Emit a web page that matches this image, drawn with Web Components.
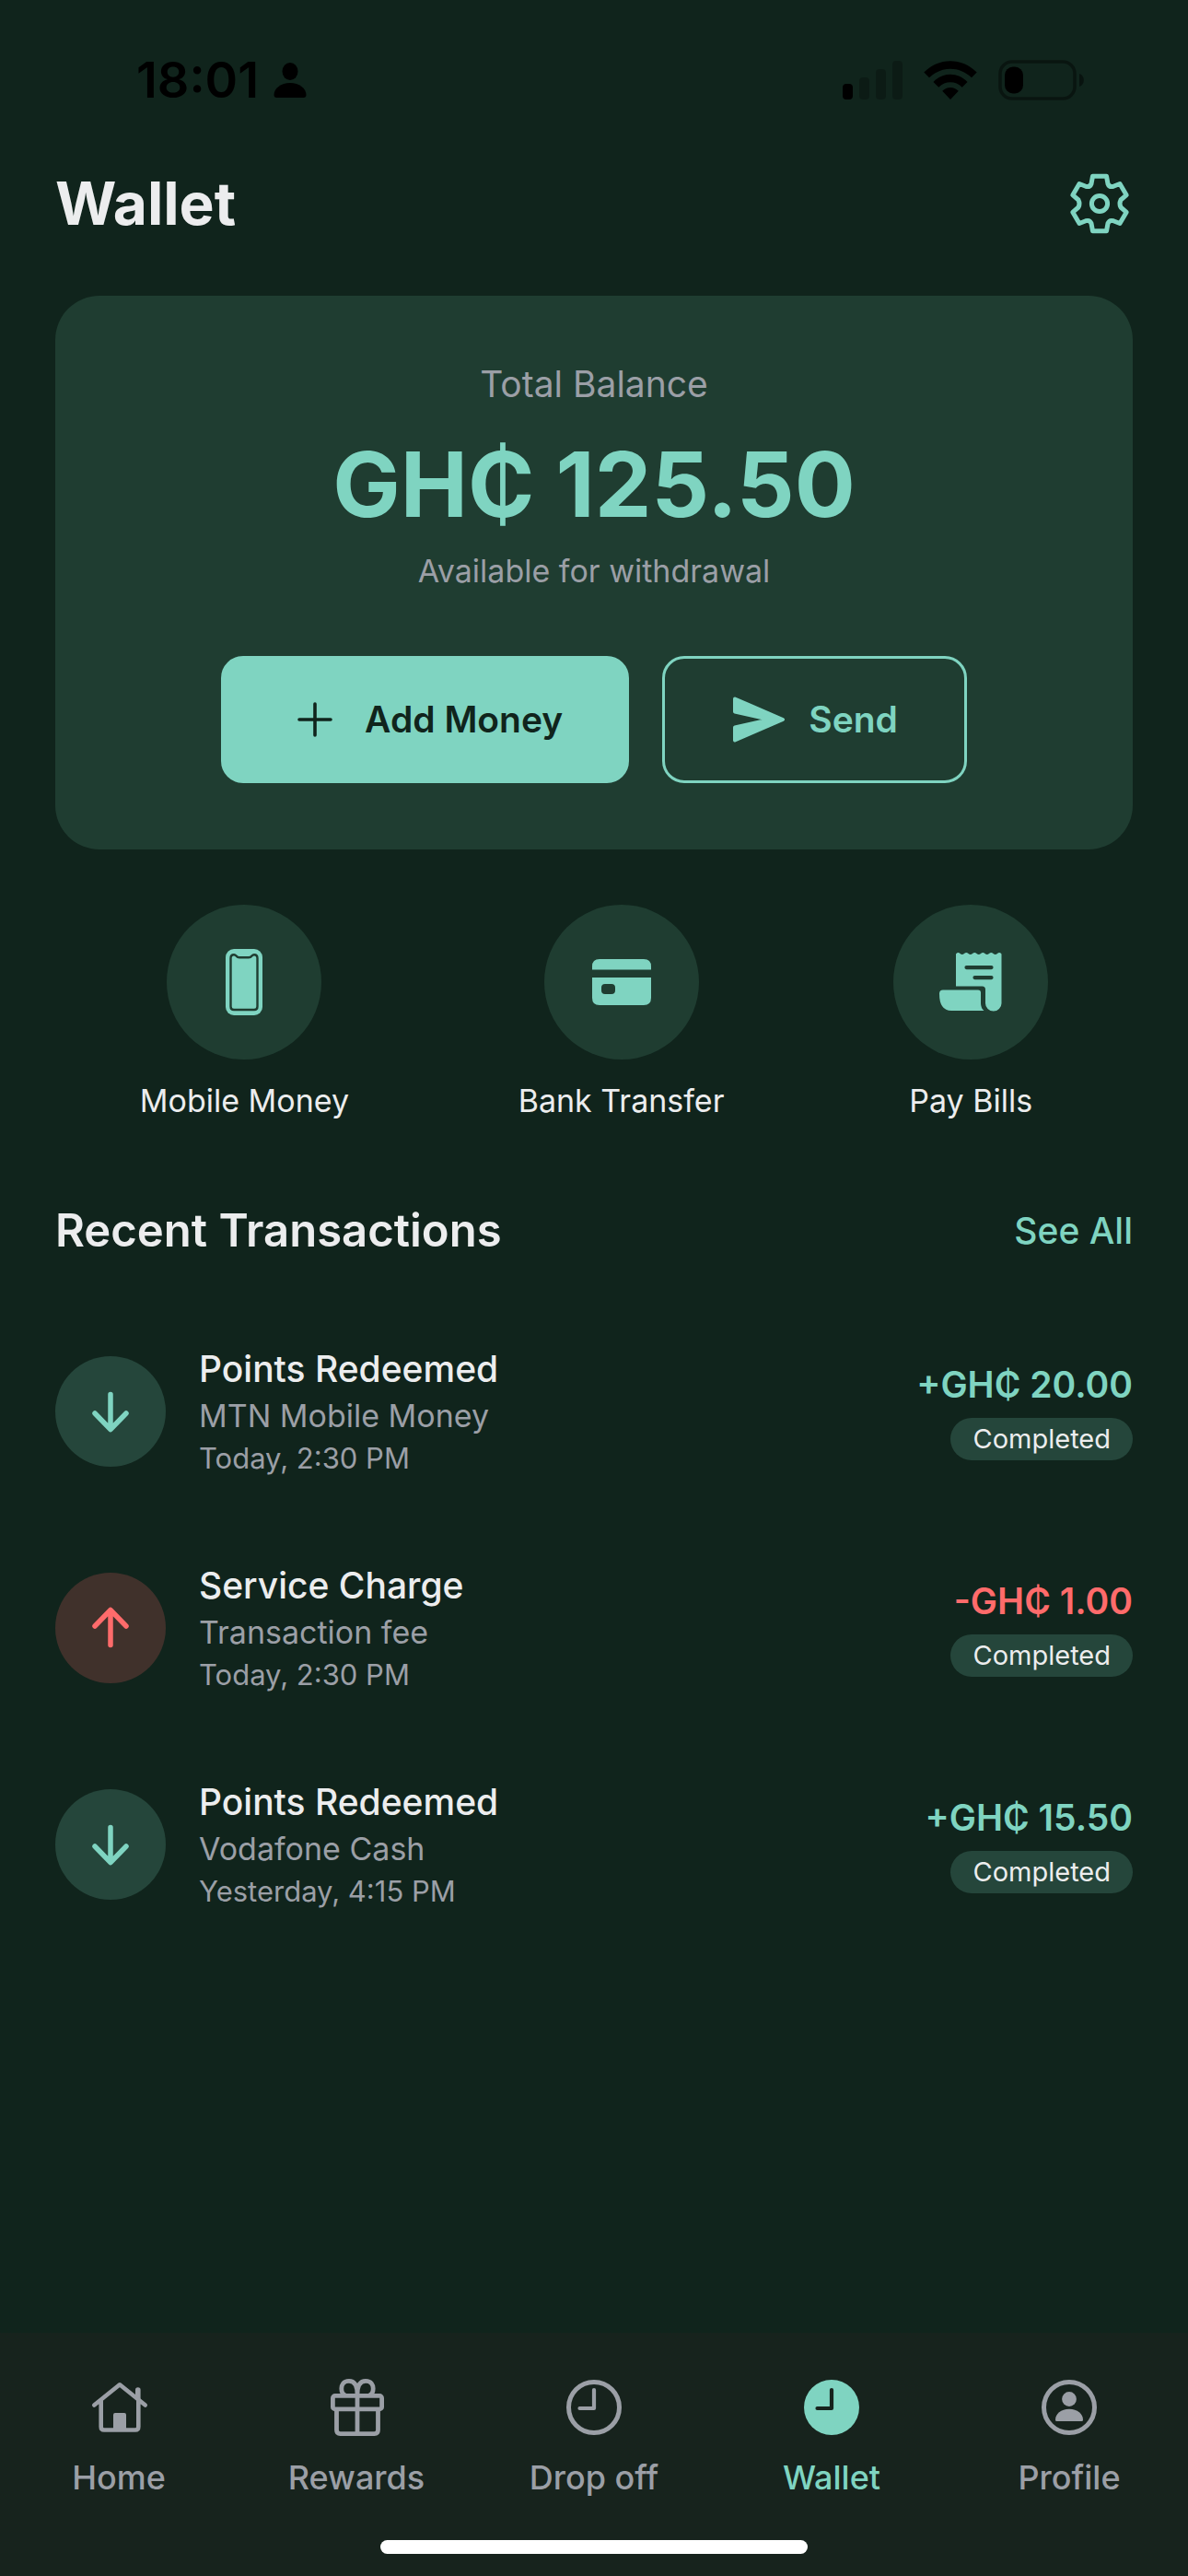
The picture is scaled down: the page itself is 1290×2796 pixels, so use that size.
<!DOCTYPE html>
<html lang="en">
<head>
<meta charset="utf-8">
<meta name="viewport" content="width=device-width, initial-scale=1">
<title>Wallet</title>
<style>
  :root {
    --bg: #10241c;
    --card: #1f3d31;
    --chip: #25463b;
    --bar: #17231d;
    --mint: #7fd4c1;
    --red: #ff6b6b;
    --red-soft: #40312b;
    --text: #ecedee;
    --muted: #9b9fa6;
  }
  body {
    margin: 0;
    background: var(--bg);
    color: var(--text);
    font-family: Inter, "Liberation Sans", sans-serif;
  }
</style>
</head>
<body>
<wallet-app>
  <status-bar slot="status" time="18:01"></status-bar>
  <page-header slot="header">Wallet</page-header>

  <balance-card label="Total Balance" note="Available for withdrawal">
    GH₵ 125.50
    <action-button slot="actions" icon="plus" variant="solid">Add Money</action-button>
    <action-button slot="actions" icon="send" variant="outline">Send</action-button>
  </balance-card>

  <quick-actions>
    <quick-action icon="phone">Mobile Money</quick-action>
    <quick-action icon="card">Bank Transfer</quick-action>
    <quick-action icon="receipt">Pay Bills</quick-action>
  </quick-actions>

  <transaction-list heading="Recent Transactions" link="See All">
    <transaction-item kind="in" amount="+GH₵ 20.00" source="MTN Mobile Money" date="Today, 2:30 PM" status="Completed">Points Redeemed</transaction-item>
    <transaction-item kind="out" amount="-GH₵ 1.00" source="Transaction fee" date="Today, 2:30 PM" status="Completed">Service Charge</transaction-item>
    <transaction-item kind="in" amount="+GH₵ 15.50" source="Vodafone Cash" date="Yesterday, 4:15 PM" status="Completed">Points Redeemed</transaction-item>
  </transaction-list>

  <tab-bar slot="tabs">
    <tab-item icon="home">Home</tab-item>
    <tab-item icon="gift">Rewards</tab-item>
    <tab-item icon="clock">Drop off</tab-item>
    <tab-item icon="clock-fill" active>Wallet</tab-item>
    <tab-item icon="profile">Profile</tab-item>
  </tab-bar>
</wallet-app>

<script>
const ICONS = {
  gear: [66, 66, `<g transform="translate(33 33)" fill="none" stroke="currentColor" stroke-width="5" stroke-linejoin="round">
    <path d="M-7.5-29.7H7.5L9-21.5Q10.5-17.5 15-18.7L22-21.5 29.2-9.3 23-4Q21 0 23 4L29.2 9.3 22 21.5 15 18.7Q10.5 17.5 9 21.5L7.5 29.7H-7.5L-9 21.5Q-10.5 17.5-15 18.7L-22 21.5-29.2 9.3-23 4Q-21 0-23-4L-29.2-9.3-22-21.5-15-18.7Q-10.5-17.5-9-21.5Z"/>
    <circle r="8.6"/></g>`],
  plus: [60, 60, `<path d="M30 13v34M13 30h34" fill="none" stroke="currentColor" stroke-width="3.6" stroke-linecap="round"/>`],
  send: [60, 60, `<path d="M4 7.5 56 30 4 52.500V38.500L42 30 4 21.500Z" fill="currentColor" stroke="currentColor" stroke-width="4" stroke-linejoin="round"/>`],
  phone: [72, 72, `<rect x="16" width="40" height="72" rx="9" fill="currentColor"/>
    <path d="M25 6.2C22.5 6.2 21.5 7.5 21.5 10V62.5Q21.5 66 25 66H47Q50.5 66 50.5 62.5V10C50.5 7.500 49.500 6.200 47 6.200 44 6.200 45 9.300 41 9.300H31C27 9.300 28 6.200 25 6.200Z" fill="none" stroke="var(--card)" stroke-width="2.4"/>`],
  card: [72, 72, `<path fill="currentColor" fill-rule="evenodd" d="M4 22.500V19Q4 11 12 11H60Q68 11 68 19V22.500ZM4 31H68V53Q68 61 60 61H12Q4 61 4 53ZM18 38Q14 38 14 42V45Q14 49 18 49H25Q29 49 29 45V42Q29 38 25 38Z"/>`],
  receipt: [72, 72, `<g transform="translate(2 4)"><path fill="currentColor" fill-rule="evenodd" d="M18 1.500Q20.300-1 22.500 1 24.800 3 27 1 29.300-1 31.500 1 33.800 3 36 1 38.300-1 40.500 1 42.800 3 45 1 47.300-1 49.500 1 51.800 3 54 1 56.300-1 58.500 1 60.800 3 63 1 65.300-1 67.500 1.500V55A8.700 8.500 0 0 1 50 55V40Q50 36.500 46.500 36.500H18ZM29.500 14A2.100 2.100 0 0 0 29.500 18.200H56.500A2.100 2.100 0 0 0 56.500 14ZM38.500 25A2.100 2.100 0 0 0 38.500 29.200H56.500A2.100 2.100 0 0 0 56.500 25Z"/>
    <path fill="currentColor" d="M0 44.500Q0 40.500 4 40.500H42Q45 40.500 45 43.500V55Q45 60 48.500 63H13Q0 63 0 44.500Z"/></g>`],
  down: [60, 60, `<path d="M30 11.500V49M13 32 30 49.500 47 32" fill="none" stroke="currentColor" stroke-width="5.500" stroke-linecap="round" stroke-linejoin="round"/>`],
  up: [60, 60, `<path d="M30 48.500V11M13 28 30 10.500 47 28" fill="none" stroke="currentColor" stroke-width="5.500" stroke-linecap="round" stroke-linejoin="round"/>`],
  home: [72, 72, `<g transform="translate(7 9)" fill="none" stroke="currentColor" stroke-width="4.600" stroke-linecap="round" stroke-linejoin="round"><path d="M2.300 24.500 30 2.300 57.700 24.500M9.700 20V48Q9.700 51.500 13 51.500H47Q50.300 51.500 50.300 48V20"/><path d="M49.800 8V17" stroke-width="5.600"/><path d="M25 35h10v16H25Z" fill="currentColor" stroke-width="4"/></g>`],
  gift: [72, 72, `<g transform="translate(8 5)" fill="none" stroke="currentColor" stroke-width="4.800" stroke-linejoin="round"><rect x="2.400" y="18.400" width="53.200" height="14.500" rx="2.500"/><path d="M6.500 33V55.500Q6.500 59.600 10.500 59.600H47.500Q51.500 59.600 51.500 55.500V33M29 16V59"/><path d="M29 17C29 8 26.500 2.400 20 2.400 13.500 2.400 11.800 7 11.800 10.500 11.800 14 13.500 17 16 18M29 17C29 8 31.500 2.400 38 2.400 44.500 2.400 46.200 7 46.200 10.500 46.200 14 44.500 17 42 18"/></g>`],
  clock: [72, 72, `<g fill="none" stroke="currentColor"><circle cx="36" cy="36" r="27.500" stroke-width="5"/><path d="M36 17V37H20.500" stroke-width="4.200" stroke-linecap="round" stroke-linejoin="round"/></g>`],
  "clock-fill": [72, 72, `<circle cx="36" cy="36" r="30" fill="currentColor"/><path d="M36 17V37H20.500" fill="none" stroke="var(--bar)" stroke-width="4.200" stroke-linecap="round" stroke-linejoin="round"/>`],
  profile: [72, 72, `<circle cx="36" cy="36" r="27.500" fill="none" stroke="currentColor" stroke-width="5"/><circle cx="36" cy="27" r="7.900" fill="currentColor"/><path d="M21 49.500C21 43 27 37.800 36 37.800S51 43 51 49.500Q51 51 49.500 51H22.500Q21 51 21 49.500Z" fill="currentColor"/>`],
  person: [36, 40, `<ellipse cx="18" cy="10.500" rx="8.500" ry="9.500"/><path d="M0.500 36C0.500 29 8 23 18 23S35.500 29 35.500 36Q35.500 39 32.500 39H3.500Q0.500 39 0.500 36Z"/>`],
  signal: [65, 42, `<rect y="25" width="11" height="17" rx="4"/><g opacity=".22"><rect x="18" y="18" width="11" height="24" rx="4"/><rect x="36" y="9" width="11" height="33" rx="4"/><rect x="54" width="11" height="42" rx="4"/></g>`],
  wifi: [58, 42, `<path d="M29 42 20.200 32.800C25 27.600 33 27.600 37.800 32.800ZM16.300 28.700 10.500 23C20.500 12 37.500 12 47.500 23L41.700 28.700C34.500 21.500 23.500 21.500 16.300 28.700ZM6 18.300.3 12.500C16.500-4 41.500-4 57.700 12.500L52 18.300C39 5.500 19 5.500 6 18.300Z"/>`],
  battery: [94, 44, `<rect x="2" y="2" width="81" height="40" rx="13" fill="none" stroke="#000" stroke-width="3.600" opacity=".4"/><rect x="7" y="7.500" width="20" height="29" rx="9"/><path d="M88 15C94.500 17 94.500 27 88 29Z" opacity=".45"/>`]
};

const define = (name, render) => customElements.define(name, class extends HTMLElement {
  connectedCallback() {
    if (this.shadowRoot) return;
    const root = this.attachShadow({ mode: "open" });
    const template = document.createElement("template");
    template.innerHTML = render(key => this.getAttribute(key) || "");
    root.append(template.content.cloneNode(true));
  }
});

define("ui-icon", get => {
  const [w, h, body] = ICONS[get("name")];
  return `<style>:host{display:inline-flex;flex:none}svg{display:block}</style>
    <svg width="${w}" height="${h}" viewBox="0 0 ${w} ${h}" fill="currentColor" aria-hidden="true">${body}</svg>`;
});

define("wallet-app", () => `
  <style>
    :host { display: flex; flex-direction: column; min-height: 100vh; }
    main { display: flex; flex-direction: column; gap: 60px; padding: 60px; }
    footer { margin-top: auto; }
  </style>
  <slot name="status"></slot>
  <slot name="header"></slot>
  <main><slot></slot></main>
  <footer><slot name="tabs"></slot></footer>`);

define("status-bar", get => `
  <style>
    :host { display: flex; justify-content: space-between; align-items: center; box-sizing: border-box;
      padding: 60px 112px 27px 148px; color: #000; }
    .group { display: flex; align-items: center; }
    .left { gap: 16px; }
    .right { gap: 23px; }
    time { font-size: 54px; line-height: 54px; font-weight: 600; }
  </style>
  <div class="group left"><time>${get("time")}</time><ui-icon name="person"></ui-icon></div>
  <div class="group right"><ui-icon name="signal"></ui-icon><ui-icon name="wifi"></ui-icon><ui-icon name="battery"></ui-icon></div>`);

define("page-header", () => `
  <style>
    :host { display: flex; justify-content: space-between; align-items: center; padding: 40px 63px 0 60px; }
    h1 { margin: 0; font-size: 64px; line-height: 80px; font-weight: 700; }
    button { display: flex; padding: 0; border: 0; background: none; color: var(--mint); }
  </style>
  <h1><slot></slot></h1>
  <button type="button" aria-label="Settings"><ui-icon name="gear"></ui-icon></button>`);

define("balance-card", get => `
  <style>
    :host { display: flex; flex-direction: column; align-items: center; padding: 72px; border-radius: 48px; background: var(--card); }
    p { margin: 0; color: var(--muted); }
    .label { font-size: 39px; line-height: 48px; }
    .amount { margin: 24px 0 12px; font-size: 98px; line-height: 122px; font-weight: 700; color: var(--mint); }
    .note { font-size: 34px; line-height: 41px; }
    .actions { display: flex; flex-wrap: wrap; justify-content: center; gap: 36px; margin-top: 72px; }
  </style>
  <p class="label">${get("label")}</p>
  <p class="amount"><slot></slot></p>
  <p class="note">${get("note")}</p>
  <div class="actions"><slot name="actions"></slot></div>`);

define("action-button", get => `
  <style>
    :host { display: block; }
    button { display: flex; align-items: center; gap: 24px; padding: 36px 69px; border: 3px solid var(--mint); border-radius: 24px;
      background: none; color: var(--mint); font: 600 39px/60px Inter, "Liberation Sans", sans-serif; }
    .solid { background: var(--mint); color: var(--bg); }
    .outline { padding: 36px 72px; }
  </style>
  <button type="button" class="${get("variant")}"><ui-icon name="${get("icon")}"></ui-icon><slot></slot></button>`);

define("quick-actions", () => `
  <style>:host { display: flex; justify-content: space-around; }</style><slot></slot>`);

define("quick-action", get => `
  <style>
    :host { display: block; }
    button { display: flex; flex-direction: column; align-items: center; gap: 24px; padding: 0; border: 0; background: none;
      color: var(--text); font: 400 34px/42px Inter, "Liberation Sans", sans-serif; }
    .disc { display: flex; align-items: center; justify-content: center; width: 168px; height: 168px; border-radius: 50%;
      background: var(--card); color: var(--mint); }
  </style>
  <button type="button"><span class="disc"><ui-icon name="${get("icon")}"></ui-icon></span><slot></slot></button>`);

define("transaction-list", get => `
  <style>
    :host { display: block; padding-top: 30px; }
    header { display: flex; justify-content: space-between; align-items: center; margin-bottom: 48px; }
    h2 { margin: 0; font-size: 49px; line-height: 60px; font-weight: 600; }
    a { color: var(--mint); font-size: 39px; line-height: 48px; font-weight: 500; text-decoration: none; }
  </style>
  <header><h2>${get("heading")}</h2><a href="#transactions">${get("link")}</a></header>
  <slot></slot>`);

define("transaction-item", get => `
  <style>
    :host { display: flex; align-items: center; gap: 36px; padding: 48px 0; }
    .disc { display: flex; align-items: center; justify-content: center; flex: none; width: 120px; height: 120px; border-radius: 50%; }
    .disc.in { background: var(--chip); }
    .disc.out { background: var(--red-soft); }
    .in { color: var(--mint); }
    .out { color: var(--red); }
    .info { display: flex; flex-direction: column; gap: 6px; flex: 1; color: var(--muted); }
    h3 { margin: 0; font-size: 39px; line-height: 47px; font-weight: 500; color: var(--text); }
    .source { font-size: 34px; line-height: 44px; }
    .date { font-size: 31px; line-height: 36px; }
    .sum { display: flex; flex-direction: column; align-items: flex-end; gap: 12px; }
    .amount { font-size: 39px; line-height: 49px; font-weight: 600; }
    .status { padding: 0 24px; border-radius: 24px; background: var(--chip); font-size: 29px; line-height: 46px; }
  </style>
  <span class="disc ${get("kind")}"><ui-icon name="${get("kind") === "in" ? "down" : "up"}"></ui-icon></span>
  <div class="info">
    <h3><slot></slot></h3>
    <span class="source">${get("source")}</span>
    <span class="date">${get("date")}</span>
  </div>
  <div class="sum">
    <span class="amount ${get("kind")}">${get("amount")}</span>
    <span class="status">${get("status")}</span>
  </div>`);

define("tab-bar", () => `
  <style>
    :host { display: flex; flex-direction: column; align-items: center; gap: 46px; padding: 45px 0 24px; background: var(--bar); }
    nav { display: flex; width: 100%; }
    .indicator { width: 36%; height: 15px; border-radius: 8px; background: #fff; }
  </style>
  <nav aria-label="Main"><slot></slot></nav>
  <div class="indicator"></div>`);

define("tab-item", get => `
  <style>
    :host { display: block; flex: 1; color: var(--muted); }
    :host([active]) { color: var(--mint); }
    a { display: flex; flex-direction: column; align-items: center; gap: 18px; color: inherit; text-decoration: none;
      font-size: 36px; line-height: 44px; font-weight: 500; }
  </style>
  <a href="#${get("icon")}"><ui-icon name="${get("icon")}"></ui-icon><slot></slot></a>`);
</script>
</body>
</html>
